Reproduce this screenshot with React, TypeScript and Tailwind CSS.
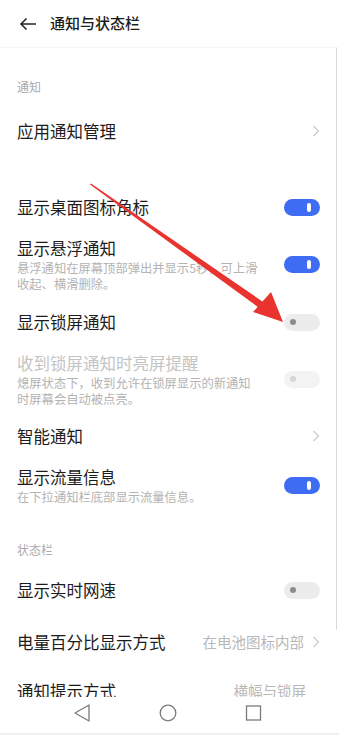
import type { ReactNode } from 'react'

const font = { fontFamily: '"Noto Sans CJK SC", "Noto Sans", sans-serif' }

function Toggle({ on, disabled }: { on?: boolean; disabled?: boolean }) {
  if (on) {
    return (
      <div className="w-[36px] h-[17px] rounded-full bg-[#3e6cf3] flex items-center justify-end pr-[9px] shrink-0">
        <div className="w-[4px] h-[9px] rounded-full bg-white" />
      </div>
    )
  }
  return (
    <div className={`w-[36px] h-[17px] rounded-full flex items-center pl-[6px] shrink-0 ${disabled ? 'bg-[#f3f3f3]' : 'bg-[#ececec]'}`}>
      <div className={`w-[6px] h-[6px] rounded-full ${disabled ? 'bg-[#d6d6d6]' : 'bg-[#8c8c8c]'}`} />
    </div>
  )
}

function Chevron() {
  return (
    <svg width="8" height="12" viewBox="0 0 8 12" className="shrink-0">
      <path d="M1.5 1 L6.5 6 L1.5 11" fill="none" stroke="#cacaca" strokeWidth="1.2" />
    </svg>
  )
}

function Row({ title, sub, right, h, dim, pt }: { title: string; sub?: string[]; right?: ReactNode; h: string; dim?: boolean; pt?: string }) {
  return (
    <div className={`flex items-center pl-[17px] pr-[19px] ${h} ${pt || ''}`}>
      <div className="flex-1 min-w-0">
        <div className={`text-[16.5px] leading-[24px] ${dim ? 'text-[#c4c4c4]' : 'text-[#1c1c1c]'}`}>{title}</div>
        {sub && sub.map((s, i) => (
          <div key={i} className="text-[12.3px] leading-[16px] text-[#b3b3b3]">{s}</div>
        ))}
      </div>
      {right}
    </div>
  )
}

export default function App() {
  return (
    <div className="w-[339px] h-[735px] bg-white flex flex-col overflow-hidden relative" style={font}>
      {/* Header */}
      <div className="h-[48px] shrink-0 flex items-center border-b border-[#f6f6f6]">
        <svg width="18" height="14" viewBox="0 0 18 14" className="ml-[19px]">
          <path d="M17 7 H2 M7.5 1.5 L2 7 L7.5 12.5" fill="none" stroke="#222" strokeWidth="1.5" />
        </svg>
        <span className="ml-[13px] text-[15px] font-medium text-[#1c1c1c]">通知与状态栏</span>
      </div>

      {/* Content */}
      <div className="flex-1 overflow-hidden">
        <div className="h-[62px] pl-[17px] pt-[31px] text-[12px] leading-[16px] text-[#aaaaaa]">通知</div>
        <Row title="应用通知管理" h="h-[42px]" right={<Chevron />} />
        <div className="h-[34px]" />
        <Row title="显示桌面图标角标" h="h-[42px]" right={<Toggle on />} />
        <Row title="显示悬浮通知" sub={['悬浮通知在屏幕顶部弹出并显示5秒，可上滑', '收起、横滑删除。']} h="h-[72px]" right={<Toggle on />} />
        <Row title="显示锁屏通知" h="h-[44px]" right={<Toggle />} />
        <Row title="收到锁屏通知时亮屏提醒" dim sub={['熄屏状态下，收到允许在锁屏显示的新通知', '时屏幕会自动被点亮。']} h="h-[70px]" right={<Toggle disabled />} />
        <Row title="智能通知" h="h-[44px]" right={<Chevron />} />
        <Row title="显示流量信息" sub={['在下拉通知栏底部显示流量信息。']} h="h-[54px]" right={<Toggle on />} />
        <div className="h-[56px] pl-[17px] pt-[30px] text-[12px] leading-[16px] text-[#aaaaaa]">状态栏</div>
        <Row title="显示实时网速" h="h-[44px]" right={<Toggle />} />
        <Row
          title="电量百分比显示方式"
          h="h-[60px]"
          right={
            <div className="flex items-center gap-[8px]">
              <span className="text-[14.5px] text-[#b8b8b8]">在电池图标内部</span>
              <Chevron />
            </div>
          }
        />
        <Row
          title="通知提示方式"
          h="h-[38px]"
          right={<span className="text-[14.5px] text-[#b8b8b8] mr-[14px]">横幅与锁屏</span>}
        />
      </div>

      {/* Nav bar */}
      <div className="h-[38px] shrink-0 bg-white border-b-[2px] border-[#f0f0f0] flex items-center relative">
        <svg width="339" height="36" viewBox="0 0 339 36">
          <path d="M89 8 L75 16 L89 24 Z" fill="none" stroke="#7a7a7a" strokeWidth="1.3" strokeLinejoin="round" />
          <circle cx="168" cy="16" r="7.8" fill="none" stroke="#7a7a7a" strokeWidth="1.3" />
          <rect x="246.5" y="9" width="14" height="14" fill="none" stroke="#7a7a7a" strokeWidth="1.3" />
        </svg>
      </div>

      {/* Scrollbar */}
      <div className="absolute right-[2px] top-[48px] w-[1.5px] h-[582px] bg-[#d9d9d9]" />

      {/* Red annotation arrow */}
      <svg className="absolute left-0 top-0 pointer-events-none" width="339" height="735" viewBox="0 0 339 735">
        <polygon points="90,184.5 91,183.5 266,304 262,310" fill="#e8332f" />
        <polygon points="283,322 253,312 271,292" fill="#e8332f" />
      </svg>
    </div>
  )
}
